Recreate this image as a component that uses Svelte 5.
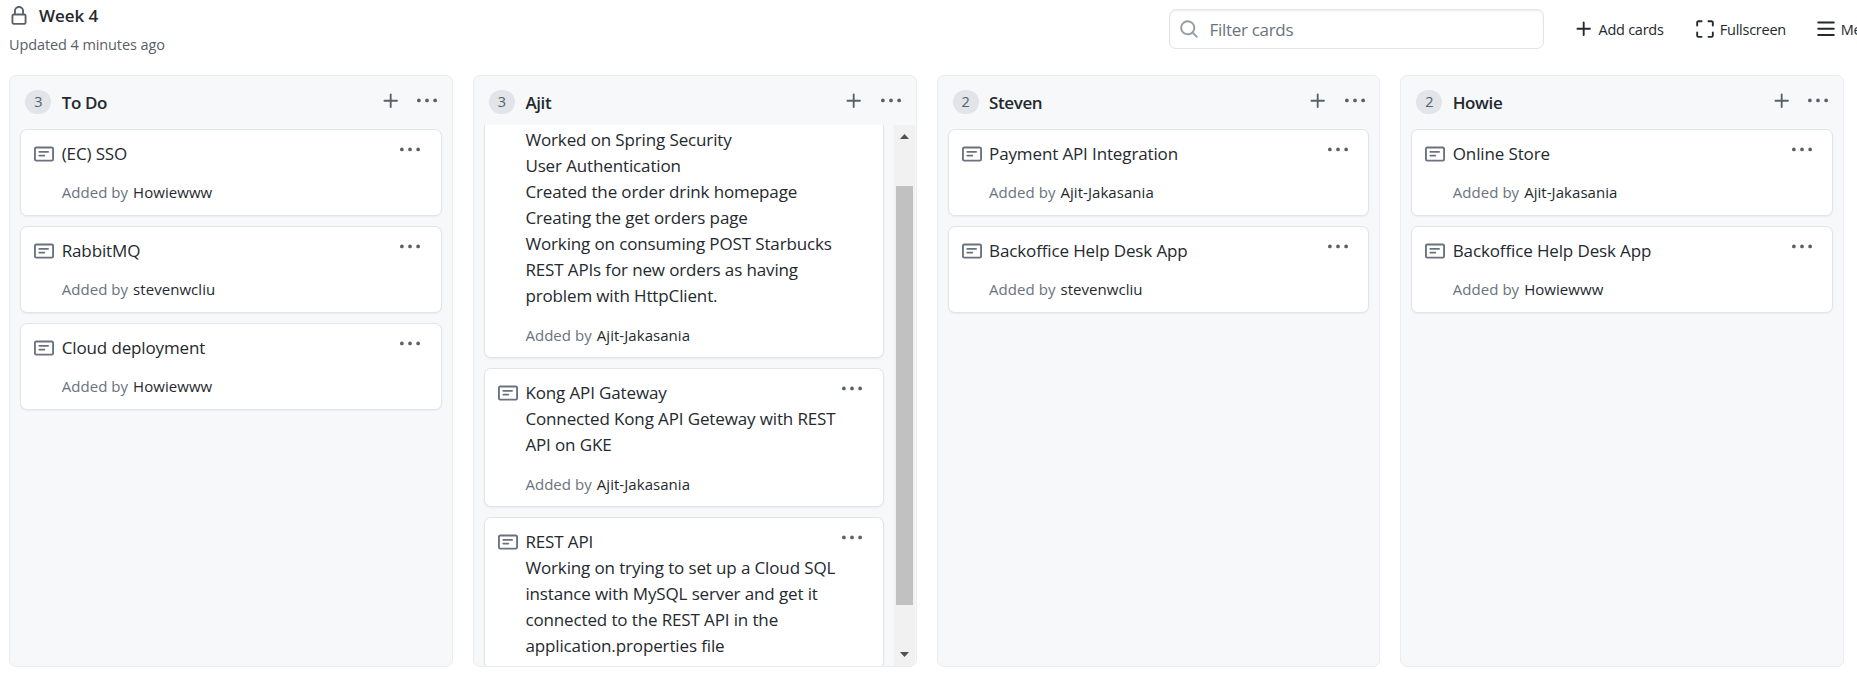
<script>
  const columns = [
    {
      name: 'To Do',
      cards: [
        { lines: ['(EC) SSO'], by: 'Howiewww' },
        { lines: ['RabbitMQ'], by: 'stevenwcliu' },
        { lines: ['Cloud deployment'], by: 'Howiewww' }
      ]
    },
    {
      name: 'Ajit',
      scrolled: true,
      cards: [
        {
          continued: true,
          lines: [
            'Worked on Spring Security',
            'User Authentication',
            'Created the order drink homepage',
            'Creating the get orders page',
            'Working on consuming POST Starbucks',
            'REST APIs for new orders as having',
            'problem with HttpClient.'
          ],
          by: 'Ajit-Jakasania'
        },
        {
          lines: ['Kong API Gateway', 'Connected Kong API Geteway with REST', 'API on GKE'],
          by: 'Ajit-Jakasania'
        },
        {
          lines: [
            'REST API',
            'Working on trying to set up a Cloud SQL',
            'instance with MySQL server and get it',
            'connected to the REST API in the',
            'application.properties file'
          ]
        }
      ]
    },
    {
      name: 'Steven',
      cards: [
        { lines: ['Payment API Integration'], by: 'Ajit-Jakasania' },
        { lines: ['Backoffice Help Desk App'], by: 'stevenwcliu' }
      ]
    },
    {
      name: 'Howie',
      cards: [
        { lines: ['Online Store'], by: 'Ajit-Jakasania' },
        { lines: ['Backoffice Help Desk App'], by: 'Howiewww' }
      ]
    }
  ];

  const icons = {
    lock: 'M4 4v2h-.25A1.75 1.75 0 002 7.75v5.5c0 .966.784 1.75 1.75 1.75h8.5A1.75 1.75 0 0014 13.25v-5.5A1.75 1.75 0 0012.25 6H12V4a4 4 0 10-8 0zm6.5 2V4a2.5 2.5 0 10-5 0v2h5zM12 7.5h.25a.25.25 0 01.25.25v5.5a.25.25 0 01-.25.25h-8.5a.25.25 0 01-.25-.25v-5.5a.25.25 0 01.25-.25H12z',
    note: 'M0 3.75C0 2.784.784 2 1.75 2h12.5c.966 0 1.75.784 1.75 1.75v8.5A1.75 1.75 0 0114.25 14H1.75A1.75 1.75 0 010 12.25v-8.5zm1.75-.25a.25.25 0 00-.25.25v8.5c0 .138.112.25.25.25h12.5a.25.25 0 00.25-.25v-8.5a.25.25 0 00-.25-.25H1.75zM3.5 6.25a.75.75 0 01.75-.75h7a.75.75 0 010 1.5h-7a.75.75 0 01-.75-.75zm.75 2.25a.75.75 0 000 1.5h4a.75.75 0 000-1.5h-4z',
    dots: 'M8 9a1.5 1.5 0 100-3 1.5 1.5 0 000 3zM1.5 9a1.5 1.5 0 100-3 1.5 1.5 0 000 3zm13 0a1.5 1.5 0 100-3 1.5 1.5 0 000 3z',
    plus: 'M7.75 2a.75.75 0 01.75.75V7h4.25a.75.75 0 110 1.5H8.5v4.25a.75.75 0 11-1.5 0V8.5H2.75a.75.75 0 010-1.5H7V2.75A.75.75 0 017.75 2z',
    search: 'M11.5 7a4.499 4.499 0 11-8.998 0A4.499 4.499 0 0111.5 7zm-.82 4.74a6 6 0 111.06-1.06l3.04 3.04a.75.75 0 11-1.06 1.06l-3.04-3.04z',
    full: 'M2.75 2.5a.25.25 0 00-.25.25v2.5a.75.75 0 01-1.5 0v-2.5C1 1.784 1.784 1 2.75 1h2.5a.75.75 0 010 1.5h-2.5zM10 1.75a.75.75 0 01.75-.75h2.5c.966 0 1.75.784 1.75 1.75v2.5a.75.75 0 01-1.5 0v-2.5a.25.25 0 00-.25-.25h-2.5a.75.75 0 01-.75-.75zM1.75 10a.75.75 0 01.75.75v2.5c0 .138.112.25.25.25h2.5a.75.75 0 010 1.5h-2.5A1.75 1.75 0 011 13.25v-2.5a.75.75 0 01.75-.75zm12.5 0a.75.75 0 01.75.75v2.5A1.75 1.75 0 0113.25 15h-2.5a.75.75 0 010-1.5h2.5a.25.25 0 00.25-.25v-2.5a.75.75 0 01.75-.75z',
    bars: 'M1 2.75A.75.75 0 011.75 2h12.5a.75.75 0 110 1.5H1.75A.75.75 0 011 2.75zm0 5A.75.75 0 011.75 7h12.5a.75.75 0 110 1.5H1.75A.75.75 0 011 7.75zM1.75 12a.75.75 0 100 1.5h12.5a.75.75 0 100-1.5H1.75z'
  };
</script>

{#snippet icon(name)}
  <svg class="icon" viewBox="0 0 16 16" aria-hidden="true"><path fill-rule="evenodd" d={icons[name]} /></svg>
{/snippet}

<div class="page">
  <header class="top">
    <div class="heading">
      <div class="title-row">{@render icon('lock')}<h1>Week 4</h1></div>
      <p class="updated">Updated 4 minutes ago</p>
    </div>
    <div class="filter">{@render icon('search')}<span>Filter cards</span></div>
    <div class="action add">{@render icon('plus')}<span>Add cards</span></div>
    <div class="action fullscreen">{@render icon('full')}<span>Fullscreen</span></div>
    <div class="action menu">{@render icon('bars')}<span>Menu</span></div>
  </header>

  <main class="board">
    {#each columns as column}
      <section class="column">
        <div class="column-head">
          <span class="count">{column.cards.length}</span>
          <h2>{column.name}</h2>
          <span class="tool">{@render icon('plus')}</span>
          <span class="tool more">{@render icon('dots')}</span>
        </div>
        <div class="column-body">
          <div class="cards" class:scrolled={column.scrolled}>
            {#each column.cards as card}
              <article class="card">
                <span class="note">{#if !card.continued}{@render icon('note')}{/if}</span>
                <div class="content">
                  {#each card.lines as line}
                    <div class="line">{line}</div>
                  {/each}
                  {#if card.by}
                    <div class="by" class:short={card.lines.length === 1}><span>Added by</span> <b>{card.by}</b></div>
                  {/if}
                </div>
                {#if !card.continued}<span class="card-more">{@render icon('dots')}</span>{/if}
              </article>
            {/each}
          </div>
          {#if column.scrolled}
            <div class="scrollbar">
              <svg class="arrow" viewBox="0 0 9 5"><path d="M0 5 4.5 0 9 5z" /></svg>
              <div class="thumb"></div>
              <svg class="arrow" viewBox="0 0 9 5"><path d="M0 0 4.5 5 9 0z" /></svg>
            </div>
          {/if}
        </div>
      </section>
    {/each}
  </main>
</div>

<style>
  :global(body) {
    margin: 0;
    background: #fff;
    overflow: hidden;
  }
  .page {
    width: 1857px;
    height: 682px;
    overflow: hidden;
    color: #24292e;
    font-family: 'Open Sans', 'Noto Sans', sans-serif;
    font-size: 17px;
    white-space: nowrap;
  }
  h1, h2, p { margin: 0; }
  .icon {
    display: block;
    flex: none;
    width: 20px;
    height: 20px;
    fill: currentColor;
  }
  .top {
    display: flex;
    height: 75px;
    padding-left: 9px;
  }
  .top > div { flex: none; }
  .heading { width: 1160px; }
  .title-row {
    display: flex;
    padding-top: 6px;
    color: #586069;
  }
  h1 {
    margin: -3px 0 0 10px;
    color: #24292e;
    font-size: 17px;
    font-weight: 600;
    line-height: 26px;
    letter-spacing: -0.05px;
  }
  .updated {
    margin-top: 5px;
    color: #586069;
    font-size: 14.5px;
    line-height: 22px;
    letter-spacing: -0.1px;
  }
  .filter {
    display: flex;
    align-items: center;
    box-sizing: border-box;
    width: 375px;
    height: 40px;
    margin-top: 9px;
    padding-left: 9px;
    border: 1px solid #e1e4e8;
    border-radius: 7px;
    box-shadow: inset 0 1px 2px rgba(27, 31, 35, 0.075);
    color: #6a737d;
  }
  .filter .icon { color: #959da5; }
  .filter span {
    margin-left: 10.5px;
    letter-spacing: -0.3px;
  }
  .action {
    display: flex;
    align-items: center;
    height: 40px;
    margin-top: 9px;
    font-size: 14.5px;
    letter-spacing: -0.25px;
  }
  .add { width: 121.3px; padding-left: 29.5px; gap: 5px; }
  .fullscreen { width: 121px; gap: 5px; }
  .menu { gap: 5px; }
  .board {
    display: flex;
    gap: 20px;
    padding-left: 9.3px;
  }
  .column {
    display: flex;
    flex: none;
    flex-direction: column;
    box-sizing: border-box;
    width: 443.7px;
    height: 592px;
    border: 1px solid #eaecef;
    border-radius: 7px;
    background: #f6f8fa;
    overflow: hidden;
  }
  .column-head {
    display: flex;
    flex: none;
    align-items: center;
    box-sizing: border-box;
    height: 49px;
    padding: 3px 14.8px 0 15px;
    color: #586069;
  }
  .count {
    width: 26px;
    height: 24px;
    margin-top: -1px;
    border-radius: 12px;
    background: #e1e4e8;
    font-size: 14.5px;
    line-height: 24px;
    text-align: center;
  }
  h2 {
    flex: 1;
    margin-left: 10.4px;
    color: #24292e;
    font-size: 17px;
    font-weight: 600;
    letter-spacing: -0.4px;
  }
  .tool { margin-top: -3px; }
  .more { margin-left: 16.5px; }
  .column-body {
    display: flex;
    flex: 1;
    min-height: 0;
  }
  .cards {
    display: flex;
    flex: 1;
    flex-direction: column;
    gap: 10px;
    padding: 4px 10px 0;
    overflow: hidden;
  }
  .cards.scrolled { padding-top: 0; }
  .scrolled .card:first-child { margin-top: -10px; }
  .card {
    display: flex;
    flex: none;
    box-sizing: border-box;
    padding: 11px 20.5px 9px 13px;
    border: 1px solid #e1e4e8;
    border-radius: 7px;
    background: #fff;
    box-shadow: 0 1px 2px rgba(27, 31, 35, 0.05);
  }
  .note {
    width: 27.4px;
    padding-top: 3px;
    color: #6a737d;
  }
  .content { flex: 1; min-width: 0; }
  .line {
    height: 26px;
    line-height: 26px;
    letter-spacing: -0.13px;
  }
  .by {
    margin-top: 15px;
    height: 24px;
    color: #6a737d;
    font-size: 15px;
    line-height: 23px;
    letter-spacing: 0.05px;
  }
  .by.short {
    margin-top: 14px;
    height: 25px;
  }
  .by b {
    margin-left: 1px;
    color: #24292e;
    font-weight: 400;
  }
  .card-more { margin-top: -1px; color: #586069; }
  .scrollbar {
    display: flex;
    flex-direction: column;
    align-items: center;
    justify-content: space-between;
    box-sizing: border-box;
    width: 21px;
    margin-right: 1px;
    padding: 9px 0;
    background: #f1f1f1;
  }
  .arrow { width: 9px; height: 5px; fill: #505050; }
  .thumb {
    width: 17px;
    height: 419px;
    background: #c1c1c1;
  }
</style>
